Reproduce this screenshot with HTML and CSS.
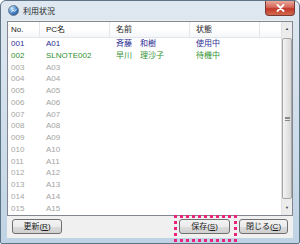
FILE: index.html
```html
<!DOCTYPE html>
<html lang="ja">
<head>
    <meta charset="UTF-8">
    <title>利用状況</title>
    <link rel="stylesheet" href="styles.css">
</head>
<body>
    <div class="window">
        <div class="titlebar">
            <svg class="app-icon" width="11" height="11" viewBox="0 0 11 11">
                <defs>
                    <radialGradient id="globe" cx="0.35" cy="0.3" r="0.8">
                        <stop offset="0" stop-color="#d8ecff"/>
                        <stop offset="0.5" stop-color="#4f8fd0"/>
                        <stop offset="1" stop-color="#1d4f8f"/>
                    </radialGradient>
                </defs>
                <circle cx="5.5" cy="5.5" r="5" fill="url(#globe)" stroke="#6a7480" stroke-width="0.8"/>
                <path d="M3 7.5 L5 5 L6.5 6.5 L8.5 4" fill="none" stroke="#ffffff" stroke-width="0.9" opacity="0.8"/>
            </svg>
            <span class="title">利用状況</span>
            <div class="close-btn">
                <svg width="9" height="8" viewBox="0 0 9 8">
                    <path d="M1.5 1 L7.5 7 M7.5 1 L1.5 7" stroke="#ffffff" stroke-width="1.8" stroke-linecap="round"/>
                </svg>
            </div>
        </div>

        <div class="client">
            <div class="list">
                <div class="list-main">
                    <div class="row header">
                        <span class="c-no">No.</span>
                        <span class="c-pc">PC名</span>
                        <span class="c-name">名前</span>
                        <span class="c-state">状態</span>
                        <span class="c-rest"></span>
                    </div>
                    <div class="row active">
                        <span class="c-no">001</span>
                        <span class="c-pc">A01</span>
                        <span class="c-name">斉藤　和樹</span>
                        <span class="c-state">使用中</span>
                    </div>
                    <div class="row waiting">
                        <span class="c-no">002</span>
                        <span class="c-pc">SLNOTE002</span>
                        <span class="c-name">早川　理沙子</span>
                        <span class="c-state">待機中</span>
                    </div>
                    <div class="row idle"><span class="c-no">003</span><span class="c-pc">A03</span></div>
                    <div class="row idle"><span class="c-no">004</span><span class="c-pc">A04</span></div>
                    <div class="row idle"><span class="c-no">005</span><span class="c-pc">A05</span></div>
                    <div class="row idle"><span class="c-no">006</span><span class="c-pc">A06</span></div>
                    <div class="row idle"><span class="c-no">007</span><span class="c-pc">A07</span></div>
                    <div class="row idle"><span class="c-no">008</span><span class="c-pc">A08</span></div>
                    <div class="row idle"><span class="c-no">009</span><span class="c-pc">A09</span></div>
                    <div class="row idle"><span class="c-no">010</span><span class="c-pc">A10</span></div>
                    <div class="row idle"><span class="c-no">011</span><span class="c-pc">A11</span></div>
                    <div class="row idle"><span class="c-no">012</span><span class="c-pc">A12</span></div>
                    <div class="row idle"><span class="c-no">013</span><span class="c-pc">A13</span></div>
                    <div class="row idle"><span class="c-no">014</span><span class="c-pc">A14</span></div>
                    <div class="row idle"><span class="c-no">015</span><span class="c-pc">A15</span></div>
                </div>
                <div class="scrollbar">
                    <div class="arrow">▲</div>
                    <div class="track">
                        <div class="thumb"><span class="grip"></span></div>
                    </div>
                    <div class="arrow">▼</div>
                </div>
            </div>

            <div class="buttons">
                <button class="btn btn-refresh">更新(<u>R</u>)</button>
                <span class="spacer"></span>
                <button class="btn btn-save">保存(<u>S</u>)<span class="mark"></span></button>
                <button class="btn btn-close">閉じる(<u>C</u>)</button>
            </div>
        </div>
    </div>
</body>
</html>
```

FILE: styles.css
```css
* {
    box-sizing: border-box;
}

body {
    margin: 0;
    width: 300px;
    height: 244px;
    overflow: hidden;
    background: #ffffff;
    font-family: "Liberation Sans", "Noto Sans CJK JP", sans-serif;
    font-size: 8px;
}

.window {
    width: 300px;
    height: 244px;
    border: 1px solid #5f7386;
    border-radius: 6px 6px 2px 2px;
    background: linear-gradient(#dfe8f0, #cddcea 60%, #bfd3e4);
    padding: 0 6px 5px 6px;
    display: flex;
    flex-direction: column;
}

/* タイトルバー */
.titlebar {
    height: 19px;
    display: flex;
    align-items: center;
    padding-left: 1px;
    position: relative;
}

.app-icon {
    margin-right: 4px;
}

.title {
    font-size: 8px;
    color: #1f1f1f;
    letter-spacing: 0;
}

.close-btn {
    position: absolute;
    right: -2px;
    top: 0;
    width: 30px;
    height: 15px;
    border: 1px solid #7a3a34;
    border-top: none;
    border-radius: 0 0 4px 4px;
    background: linear-gradient(#e9a899, #d4675a 45%, #c2382a 55%, #d26a4c);
    display: flex;
    align-items: center;
    justify-content: center;
}

/* クライアント領域 */
.client {
    flex: 1;
    background: #f0f0f0;
    display: flex;
    flex-direction: column;
    padding-top: 1px;
}

.list {
    height: 195px;
    border: 1px solid #828790;
    background: #ffffff;
    display: flex;
}

.list-main {
    flex: 1;
    display: flex;
    flex-direction: column;
}

.row {
    display: flex;
    height: 11.75px;
    line-height: 11.75px;
    white-space: nowrap;
}

.row span {
    display: block;
    overflow: hidden;
}

.c-no { width: 32px; padding-left: 3px; }
.c-pc { width: 70px; padding-left: 6px; }
.c-name { width: 80px; padding-left: 6px; }
.c-state { width: 70px; padding-left: 6px; }
.c-rest { flex: 1; }

.header {
    height: 16px;
    line-height: 16px;
    color: #222222;
    background: linear-gradient(#ffffff, #ffffff 50%, #f4f6f8);
    border-bottom: 1px solid #e3e6ea;
}

.header span {
    border-right: 1px solid #e4e7eb;
}

.header .c-rest {
    border-right: none;
}

.active { color: #2d2d94; }
.waiting { color: #2f922f; }
.idle { color: #a4a4a4; }

/* スクロールバー */
.scrollbar {
    width: 11px;
    background: #ececec;
    border-left: 1px solid #e2e2e2;
    display: flex;
    flex-direction: column;
}

.arrow {
    height: 14px;
    font-size: 4px;
    line-height: 14px;
    text-align: center;
    color: #3a3a3a;
}

.track {
    flex: 1;
    padding: 2px 0;
    display: flex;
}

.thumb {
    flex: 1;
    border: 1px solid #a6a6a6;
    border-radius: 2px;
    background: linear-gradient(90deg, #f4f4f4, #e6e6e6 50%, #d8d8d8);
    display: flex;
    align-items: center;
    justify-content: center;
}

.grip {
    width: 5px;
    height: 4px;
    border-top: 1px solid #8a8a8a;
    border-bottom: 1px solid #8a8a8a;
    background: linear-gradient(#8a8a8a, #8a8a8a) center / 5px 1px no-repeat;
}

/* ボタン */
.buttons {
    display: flex;
    margin-top: 3px;
    padding: 0 5px 0 5px;
}

.spacer {
    flex: 1;
}

.btn {
    height: 15px;
    padding: 0;
    border: 1px solid #707070;
    border-radius: 3px;
    background: linear-gradient(#f3f3f3, #ebebeb 50%, #dddddd 51%, #cfcfcf);
    font-family: "Liberation Sans", "Noto Sans CJK JP", sans-serif;
    font-size: 8px;
    line-height: 13px;
    color: #1a1a1a;
    text-align: center;
}

.btn-refresh { width: 50px; }
.btn-save { width: 51px; position: relative; margin-right: 9px; }
.btn-close { width: 49px; }

/* 強調枠 */
.mark {
    position: absolute;
    left: -6px;
    top: -5px;
    width: 63px;
    height: 27px;
    border: 3px dotted #e8237c;
}
```
